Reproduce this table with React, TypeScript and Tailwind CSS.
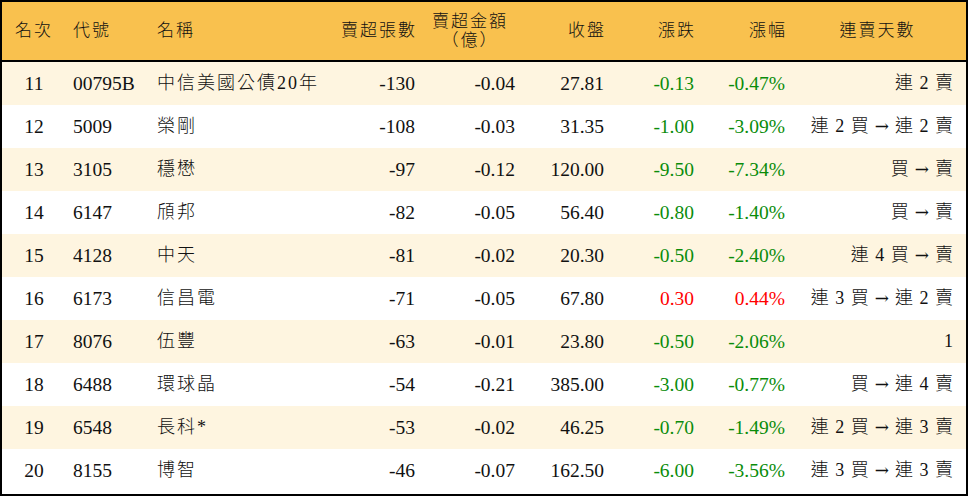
const rows = [
  { rank: 11, code: "00795B", name: "中信美國公債20年", vol: "-130", amt: "-0.04", close: "27.81", chg: "-0.13", pct: "-0.47%", streak: "連 2 賣" },
  { rank: 12, code: "5009", name: "榮剛", vol: "-108", amt: "-0.03", close: "31.35", chg: "-1.00", pct: "-3.09%", streak: "連 2 買 → 連 2 賣" },
  { rank: 13, code: "3105", name: "穩懋", vol: "-97", amt: "-0.12", close: "120.00", chg: "-9.50", pct: "-7.34%", streak: "買 → 賣" },
  { rank: 14, code: "6147", name: "頎邦", vol: "-82", amt: "-0.05", close: "56.40", chg: "-0.80", pct: "-1.40%", streak: "買 → 賣" },
  { rank: 15, code: "4128", name: "中天", vol: "-81", amt: "-0.02", close: "20.30", chg: "-0.50", pct: "-2.40%", streak: "連 4 買 → 賣" },
  { rank: 16, code: "6173", name: "信昌電", vol: "-71", amt: "-0.05", close: "67.80", chg: "0.30", pct: "0.44%", streak: "連 3 買 → 連 2 賣" },
  { rank: 17, code: "8076", name: "伍豐", vol: "-63", amt: "-0.01", close: "23.80", chg: "-0.50", pct: "-2.06%", streak: "1" },
  { rank: 18, code: "6488", name: "環球晶", vol: "-54", amt: "-0.21", close: "385.00", chg: "-3.00", pct: "-0.77%", streak: "買 → 連 4 賣" },
  { rank: 19, code: "6548", name: "長科*", vol: "-53", amt: "-0.02", close: "46.25", chg: "-0.70", pct: "-1.49%", streak: "連 2 買 → 連 3 賣" },
  { rank: 20, code: "8155", name: "博智", vol: "-46", amt: "-0.07", close: "162.50", chg: "-6.00", pct: "-3.56%", streak: "連 3 買 → 連 3 賣" },
];

const grid = "grid grid-cols-[64px_84px_180px_95px_100px_89px_90px_91px_1fr] items-center";

// Render "連 2 買 → 連 2 賣" with a long serif arrow like the source table
function Streak({ text }: { text: string }) {
  const parts = text.split(" → ");
  return (
    <>
      {parts.map((p, i) => (
        <span key={i}>
          {i > 0 && <span className="mx-[5px] font-['DejaVu_Serif'] text-[17px]">→</span>}
          <span>{p}</span>
        </span>
      ))}
    </>
  );
}

export default function App() {
  return (
    <div
      className="w-[968px] h-[496px] bg-white text-[19.5px] text-[#111] border-2 border-black overflow-hidden"
      style={{ fontFamily: '"Liberation Serif", "Noto Sans CJK TC", serif' }}
    >
      {/* header */}
      <div className={`${grid} h-[60px] bg-[#f9c14e] border-b-2 border-black text-[17px] tracking-[2px] font-light`}>
        <div className="text-center">名次</div>
        <div className="pl-[7px]">代號</div>
        <div className="pl-[7px]">名稱</div>
        <div className="pr-[8px] text-right">賣超張數</div>
        <div className="pr-[10px] text-center leading-[19px]">
          <div>賣超金額</div>
          <div>（億）</div>
        </div>
        <div className="pr-[8px] text-right">收盤</div>
        <div className="pr-[8px] text-right">漲跌</div>
        <div className="pr-[8px] text-right">漲幅</div>
        <div className="pr-[6px] text-center">連賣天數</div>
      </div>

      {rows.map((r, i) => {
        const color = r.chg.startsWith("-") ? "text-[#0a8c0a]" : "text-[#ff0000]";
        return (
          <div key={r.rank} className={`${grid} h-[43px] ${i % 2 === 0 ? "bg-[#fef5e0]" : "bg-white"}`}>
            <div className="text-center">{r.rank}</div>
            <div className="pl-[7px]">{r.code}</div>
            <div className="pl-[7px] text-[18px] tracking-[2px] font-light">{r.name}</div>
            <div className="pr-[10px] text-right">{r.vol}</div>
            <div className="pr-[10px] text-right">{r.amt}</div>
            <div className="pr-[10px] text-right">{r.close}</div>
            <div className={`pr-[10px] text-right ${color}`}>{r.chg}</div>
            <div className={`pr-[10px] text-right ${color}`}>{r.pct}</div>
            <div className="pr-[12px] text-right whitespace-nowrap text-[18px] font-light tracking-[1px]">
              <Streak text={r.streak} />
            </div>
          </div>
        );
      })}
    </div>
  );
}
